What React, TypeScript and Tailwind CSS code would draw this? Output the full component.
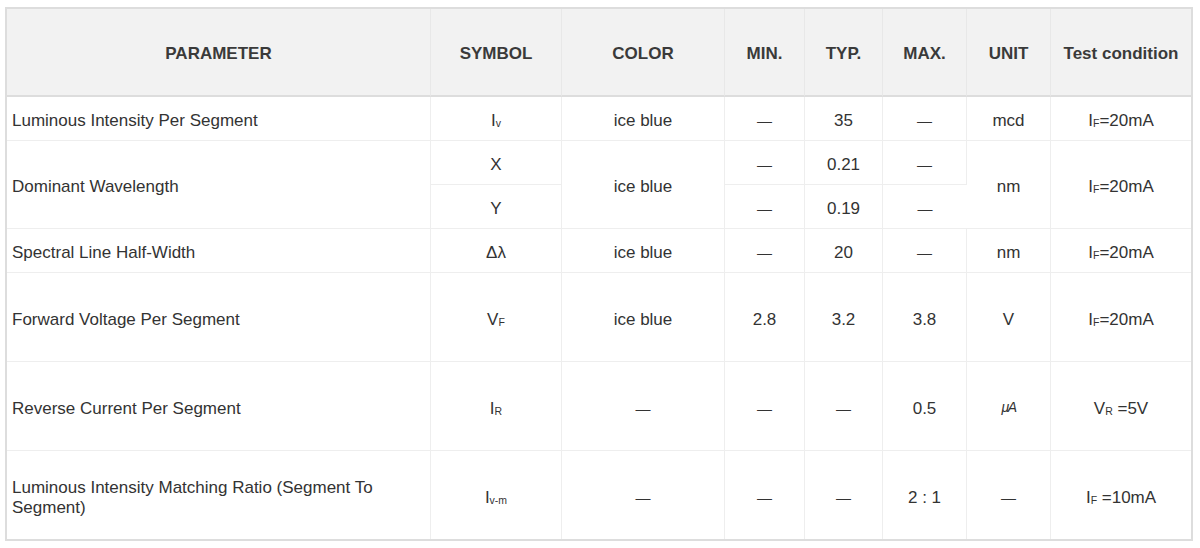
import React from "react";

const DASH = "—";

function Sub({ children }: { children: React.ReactNode }) {
  return <sub className="text-[10.5px] bottom-[-1px]">{children}</sub>;
}

const td = "border-r border-b border-[#eeeeee] text-center align-middle px-[5px] pt-[5px] last:border-r-0";
const dash = <span className="text-[15px]">{DASH}</span>;

export default function App() {
  return (
    <div
      className="w-[1200px] h-[548px] bg-white pt-[7px] pl-[5px] text-[17px] text-[#333333]"
      style={{ fontFamily: '"Liberation Sans", Arial, Helvetica, sans-serif' }}
    >
      <table className="table-fixed border-separate border-spacing-0 border-2 border-[#dddddd] w-[1188px]">
        <colgroup>
          <col className="w-[424px]" />
          <col className="w-[131px]" />
          <col className="w-[163px]" />
          <col className="w-[80px]" />
          <col className="w-[78px]" />
          <col className="w-[84px]" />
          <col className="w-[84px]" />
          <col className="w-[140px]" />
        </colgroup>
        <thead>
          <tr className="h-[88px] bg-[#f2f2f2]">
            {["PARAMETER", "SYMBOL", "COLOR", "MIN.", "TYP.", "MAX.", "UNIT", "Test condition"].map((h) => (
              <th
                key={h}
                className="border-r border-b-2 border-r-[#e8e8e8] border-b-[#dddddd] text-center align-middle font-bold text-[#3a3a3a] px-[5px] pt-[3px] last:border-r-0"
              >
                {h}
              </th>
            ))}
          </tr>
        </thead>
        <tbody>
          <tr className="h-[44px]">
            <td className={`${td} text-left`}>Luminous Intensity Per Segment</td>
            <td className={td}>
              I<Sub>v</Sub>
            </td>
            <td className={td}>ice blue</td>
            <td className={td}>{dash}</td>
            <td className={td}>35</td>
            <td className={td}>{dash}</td>
            <td className={td}>mcd</td>
            <td className={td}>
              I<Sub>F</Sub>=20mA
            </td>
          </tr>
          <tr className="h-[44px]">
            <td rowSpan={2} className={`${td} text-left`}>
              Dominant Wavelength
            </td>
            <td className={td}>X</td>
            <td rowSpan={2} className={td}>
              ice blue
            </td>
            <td className={td}>{dash}</td>
            <td className={td}>0.21</td>
            <td className={td}>{dash}</td>
            <td rowSpan={2} className={td}>
              nm
            </td>
            <td rowSpan={2} className={td}>
              I<Sub>F</Sub>=20mA
            </td>
          </tr>
          <tr className="h-[44px]">
            <td className={td}>Y</td>
            <td className={td}>{dash}</td>
            <td className={td}>0.19</td>
            <td className={td}>{dash}</td>
          </tr>
          <tr className="h-[44px]">
            <td className={`${td} text-left`}>Spectral Line Half-Width</td>
            <td className={td}>Δλ</td>
            <td className={td}>ice blue</td>
            <td className={td}>{dash}</td>
            <td className={td}>20</td>
            <td className={td}>{dash}</td>
            <td className={td}>nm</td>
            <td className={td}>
              I<Sub>F</Sub>=20mA
            </td>
          </tr>
          <tr className="h-[89px]">
            <td className={`${td} text-left`}>Forward Voltage Per Segment</td>
            <td className={td}>
              V<Sub>F</Sub>
            </td>
            <td className={td}>ice blue</td>
            <td className={td}>2.8</td>
            <td className={td}>3.2</td>
            <td className={td}>3.8</td>
            <td className={td}>V</td>
            <td className={td}>
              I<Sub>F</Sub>=20mA
            </td>
          </tr>
          <tr className="h-[89px]">
            <td className={`${td} text-left`}>Reverse Current Per Segment</td>
            <td className={td}>
              I<Sub>R</Sub>
            </td>
            <td className={td}>{dash}</td>
            <td className={td}>{dash}</td>
            <td className={td}>{dash}</td>
            <td className={td}>0.5</td>
            <td className={td}>
              <span className="inline-block text-[14px] tracking-[-1.5px] italic -translate-y-[2px]">μA</span>
            </td>
            <td className={td}>
              V<Sub>R</Sub> =5V
            </td>
          </tr>
          <tr className="h-[88px]">
            <td className={`${td} text-left border-b-0 leading-[20px]`}>
              Luminous Intensity Matching Ratio (Segment To Segment)
            </td>
            <td className={`${td} border-b-0`}>
              I<Sub>v-m</Sub>
            </td>
            <td className={`${td} border-b-0`}>{dash}</td>
            <td className={`${td} border-b-0`}>{dash}</td>
            <td className={`${td} border-b-0`}>{dash}</td>
            <td className={`${td} border-b-0`}>2 : 1</td>
            <td className={`${td} border-b-0`}>{dash}</td>
            <td className={`${td} border-b-0`}>
              I<Sub>F</Sub> =10mA
            </td>
          </tr>
        </tbody>
      </table>
    </div>
  );
}
